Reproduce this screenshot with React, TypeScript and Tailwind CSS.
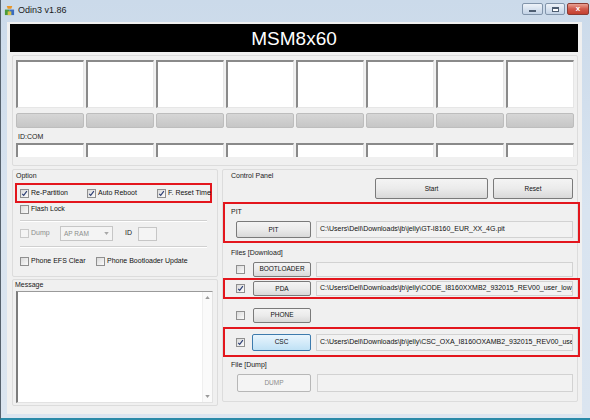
import React from 'react';

const PATH_PIT = 'C:\\Users\\Dell\\Downloads\\jb\\jelly\\GT-I8160_EUR_XX_4G.pit';
const PATH_PDA = 'C:\\Users\\Dell\\Downloads\\jb\\jelly\\CODE_I8160XXMB2_932015_REV00_user_low_ship.tar.md5';
const PATH_CSC = 'C:\\Users\\Dell\\Downloads\\jb\\jelly\\CSC_OXA_I8160OXAMB2_932015_REV00_user_low_ship.tar.md5';

const Check = ({ checked, disabled }: { checked?: boolean; disabled?: boolean }) => (
  <span
    className={`flex h-[9px] w-[9px] shrink-0 items-center justify-center border ${
      disabled ? 'border-[#c9c9c9] bg-[#f4f4f4]' : 'border-[#8f8f8f] bg-linear-to-br from-[#dadada] to-[#fbfbfb]'
    }`}
  >
    {checked && (
      <svg viewBox="0 0 8 8" className="h-[7px] w-[7px]">
        <path d="M1.4 4.3 L3.1 6.2 L6.7 1.3" fill="none" stroke="#2c3e74" strokeWidth="1.3" />
      </svg>
    )}
  </span>
);

type BtnKind = 'normal' | 'focus' | 'disabled';

const Btn = ({ children, className, kind = 'normal' }: { children: React.ReactNode; className: string; kind?: BtnKind }) => {
  const look =
    kind === 'focus'
      ? 'border-[#3d7bad] bg-linear-to-b from-[#e9f5fd] to-[#bfe1f5] text-[#111]'
      : kind === 'disabled'
      ? 'border-[#b7b7b7] bg-[#f4f4f4] text-[#8c8c8c]'
      : 'border-[#7a7a7a] bg-linear-to-b from-[#f4f4f4] via-[#ebebeb] to-[#d9d9d9] text-[#111]';
  return (
    <div className={`flex shrink-0 items-center justify-center rounded-[2px] border text-[6.5px] ${look} ${className}`}>
      {children}
    </div>
  );
};

const PathBox = ({ text, className }: { text?: string; className: string }) => (
  <div className={`flex shrink-0 items-center overflow-hidden whitespace-nowrap border border-[#d2d2d2] bg-[#f2f2f2] pl-[3px] text-[7px] text-[#111] ${className}`}>
    {text}
  </div>
);

const Label = ({ children, className = '' }: { children: React.ReactNode; className?: string }) => (
  <div className={`h-[12px] whitespace-nowrap leading-[12px] text-[7px] text-[#1a1a1a] ${className}`}>{children}</div>
);

const Separator = ({ className }: { className: string }) => (
  <div className={`ml-[5px] w-[187px] border-t border-b border-t-[#d0d0d0] border-b-white ${className}`} />
);

const ports = [0, 1, 2, 3, 4, 5, 6, 7];

export default function App() {
  return (
    <div className="flex h-[420px] w-[590px] flex-col overflow-hidden border-l border-b-2 border-l-[#56626e] border-b-[#2a8aa8] bg-linear-to-b from-[#cbdaea] via-[#d9e4f0] to-[#dbe5f0] font-['Liberation_Sans',Arial,sans-serif]">
      {/* title bar */}
      <div className="flex h-[22px] shrink-0 items-start">
        <div className="mt-[5px] ml-[3px] flex items-center">
          <svg viewBox="0 0 12 12" className="h-[11px] w-[11px]">
            <path d="M3 1 L9 1 L8 4 L4 4 Z" fill="#e8962a" />
            <rect x="1" y="5" width="5" height="6" fill="#4a9a3a" />
            <rect x="6" y="5" width="5" height="6" fill="#3a6cc0" />
            <rect x="4" y="7" width="4" height="4" fill="#d9c24a" />
          </svg>
          <span className="ml-[3px] text-[9px] leading-none text-[#1b1b1b]">Odin3 v1.86</span>
        </div>
        <div className="mt-[3px] ml-auto mr-[1px] flex gap-[2px]">
          <div className="flex h-[12px] w-[21px] items-center justify-center rounded-[2px] border border-[#8295ab] bg-linear-to-b from-[#eef3f9] to-[#c3d3e6]">
            <div className="mt-[3px] h-[2px] w-[7px] border border-[#4e5e72] bg-white" />
          </div>
          <div className="flex h-[12px] w-[20px] items-center justify-center rounded-[2px] border border-[#8295ab] bg-linear-to-b from-[#eef3f9] to-[#c3d3e6]">
            <div className="h-[5px] w-[7px] border border-[#4e5e72] border-t-2 bg-white" />
          </div>
          <div className="flex h-[12px] w-[22px] items-center justify-center rounded-[2px] border border-[#8a3b33] bg-linear-to-b from-[#e8a093] via-[#d0584a] to-[#c4402f]">
            <span className="text-[8px] font-bold leading-none text-white">x</span>
          </div>
        </div>
      </div>

      {/* client area */}
      <div className="ml-[6px] flex h-[392px] w-[575px] shrink-0 flex-col bg-[#f0f0f0]">
        <div className="mt-[2px] ml-[3px] flex h-[28px] w-[568px] items-center justify-center bg-black">
          <span className="text-[19px] leading-none text-white">MSM8x60</span>
        </div>

        {/* ports */}
        <div className="mt-[3px] ml-[5px] h-[111px] w-[566px] rounded-[2px] border border-[#dcdcdc] pt-[4px] pl-[3px]">
          <div className="grid h-[48px] w-[558px] grid-cols-8 gap-x-[2px]">
            {ports.map(p => (
              <div key={p} className="border-t-2 border-l-2 border-r border-b border-t-[#8a8a8a] border-l-[#8a8a8a] border-r-[#e6e6e6] border-b-[#e6e6e6] bg-white" />
            ))}
          </div>
          <div className="mt-[5px] grid h-[15px] w-[558px] grid-cols-8 gap-x-[2px]">
            {ports.map(p => (
              <div key={p} className="rounded-[2px] border border-[#bdbdbd] bg-linear-to-b from-[#d6d6d6] to-[#c6c6c6]" />
            ))}
          </div>
          <Label className="mt-[3px] pl-[2px]">ID:COM</Label>
          <div className="grid h-[14px] w-[558px] grid-cols-8 gap-x-[2px]">
            {ports.map(p => (
              <div key={p} className="border-t-2 border-l-2 border-r border-t-[#8a8a8a] border-l-[#8a8a8a] border-r-[#e6e6e6] bg-white" />
            ))}
          </div>
        </div>

        <div className="mt-[3px] ml-[5px] flex gap-[4px]">
          {/* left column */}
          <div className="flex w-[206px] flex-col gap-[2px]">
            <div className="h-[108px] rounded-[2px] border border-[#dcdcdc] px-[2px]">
              <Label className="pl-[1px]">Option</Label>
              <div className="mt-px flex h-[20px] w-[197px] items-center whitespace-nowrap border-2 border-[#e3161d] pl-[3px] text-[7px] text-[#111]">
                <div className="flex w-[67px] shrink-0 items-center gap-[2px]">
                  <Check checked />
                  <span>Re-Partition</span>
                </div>
                <div className="flex w-[70px] shrink-0 items-center gap-[2px]">
                  <Check checked />
                  <span>Auto Reboot</span>
                </div>
                <div className="flex shrink-0 items-center gap-[2px]">
                  <Check checked />
                  <span>F. Reset Time</span>
                </div>
              </div>
              <div className="flex h-[12px] items-center gap-[2px] pl-[5px] text-[7px] text-[#111]">
                <Check />
                <span>Flash Lock</span>
              </div>
              <Separator className="mt-[5px]" />
              <div className="mt-[4px] flex h-[15px] items-center pl-[5px] text-[7px] text-[#8c8c8c]">
                <div className="flex w-[40px] items-center gap-[2px]">
                  <Check disabled />
                  <span>Dump</span>
                </div>
                <div className="flex h-[15px] w-[53px] items-center justify-between border border-[#c6c6c6] bg-[#f4f4f4] px-[3px] text-[6.5px]">
                  <span>AP RAM</span>
                  <svg viewBox="0 0 6 4" className="h-[3px] w-[5px]">
                    <path d="M0 0 L6 0 L3 4 Z" fill="#a8a8a8" />
                  </svg>
                </div>
                <span className="ml-[12px] text-[#1a1a1a]">ID</span>
                <div className="ml-[6px] h-[14px] w-[19px] border border-[#c6c6c6] bg-[#f4f4f4]" />
              </div>
              <Separator className="mt-[5px]" />
              <div className="mt-[7px] flex h-[12px] items-center whitespace-nowrap pl-[5px] text-[7px] text-[#111]">
                <div className="flex w-[76px] shrink-0 items-center gap-[2px]">
                  <Check />
                  <span>Phone EFS Clear</span>
                </div>
                <div className="flex items-center gap-[2px]">
                  <Check />
                  <span>Phone Bootloader Update</span>
                </div>
              </div>
            </div>

            <div className="h-[127px] rounded-[2px] border border-[#dcdcdc]">
              <div className="h-[11px] pl-[2px] text-[7px] leading-[10px] text-[#1a1a1a]">Message</div>
              <div className="ml-[3px] flex h-[112px] w-[197px] border-t border-l-2 border-t-[#9a9a9a] border-l-[#7c7c7c] border-r border-b border-r-[#e2e2e2] border-b-[#e2e2e2] bg-white">
                <div className="flex-1" />
                <div className="flex w-[10px] flex-col items-center justify-between border-l border-[#efefef] bg-[#fafafa] py-[4px]">
                  <svg viewBox="0 0 6 4" className="h-[3px] w-[5px]">
                    <path d="M0 4 L6 4 L3 0 Z" fill="#9a9a9a" />
                  </svg>
                  <svg viewBox="0 0 6 4" className="h-[3px] w-[5px]">
                    <path d="M0 0 L6 0 L3 4 Z" fill="#9a9a9a" />
                  </svg>
                </div>
              </div>
            </div>
          </div>

          {/* right column */}
          <div className="w-[356px]">
            <div className="h-[233px] rounded-[2px] border border-[#dcdcdc]">
              <div className="flex justify-between">
                <Label className="pl-[8px]">Control Panel</Label>
                <div className="mt-[8px] flex gap-[5px] pr-[4px]">
                  <Btn className="h-[21px] w-[113px]">Start</Btn>
                  <Btn className="h-[21px] w-[80px]">Reset</Btn>
                </div>
              </div>

              <div className="mt-[3px] h-[41px] w-[357px] border-2 border-[#e3161d]">
                <Label className="mt-[2px] pl-[6px]">PIT</Label>
                <div className="mt-[3px] flex h-[17px] pl-[11px]">
                  <Btn className="h-[17px] w-[75px]">PIT</Btn>
                  <PathBox className="ml-[5px] h-[17px] w-[257px]" text={PATH_PIT} />
                </div>
              </div>

              <Label className="mt-[4px] pl-[8px]">Files [Download]</Label>
              <div className="mt-[2px] flex h-[16px] items-center pl-[13px]">
                <Check />
                <Btn className="ml-[8px] h-[15px] w-[58px]">BOOTLOADER</Btn>
                <PathBox className="ml-[5px] h-[15px] w-[257px]" />
              </div>

              <div className="mt-px flex h-[21px] w-[357px] items-center border-2 border-[#e3161d] pl-[11px]">
                <Check checked />
                <Btn className="ml-[8px] h-[15px] w-[58px]">PDA</Btn>
                <PathBox className="ml-[5px] h-[15px] w-[257px]" text={PATH_PDA} />
              </div>

              <div className="mt-[8px] flex h-[16px] items-center pl-[13px]">
                <Check />
                <Btn className="ml-[8px] h-[15px] w-[58px]">PHONE</Btn>
              </div>

              <div className="mt-[4px] flex h-[30px] w-[357px] items-center border-2 border-[#e3161d] pl-[11px]">
                <Check checked />
                <Btn kind="focus" className="ml-[7px] h-[17px] w-[59px]">CSC</Btn>
                <PathBox className="ml-[5px] h-[17px] w-[257px]" text={PATH_CSC} />
              </div>

              <Label className="mt-[2px] pl-[8px]">File [Dump]</Label>
              <div className="mt-[3px] flex h-[18px] pl-[14px]">
                <Btn kind="disabled" className="h-[18px] w-[74px]">DUMP</Btn>
                <PathBox className="ml-[6px] h-[18px] w-[256px]" />
              </div>
            </div>
          </div>
        </div>
      </div>
    </div>
  );
}
